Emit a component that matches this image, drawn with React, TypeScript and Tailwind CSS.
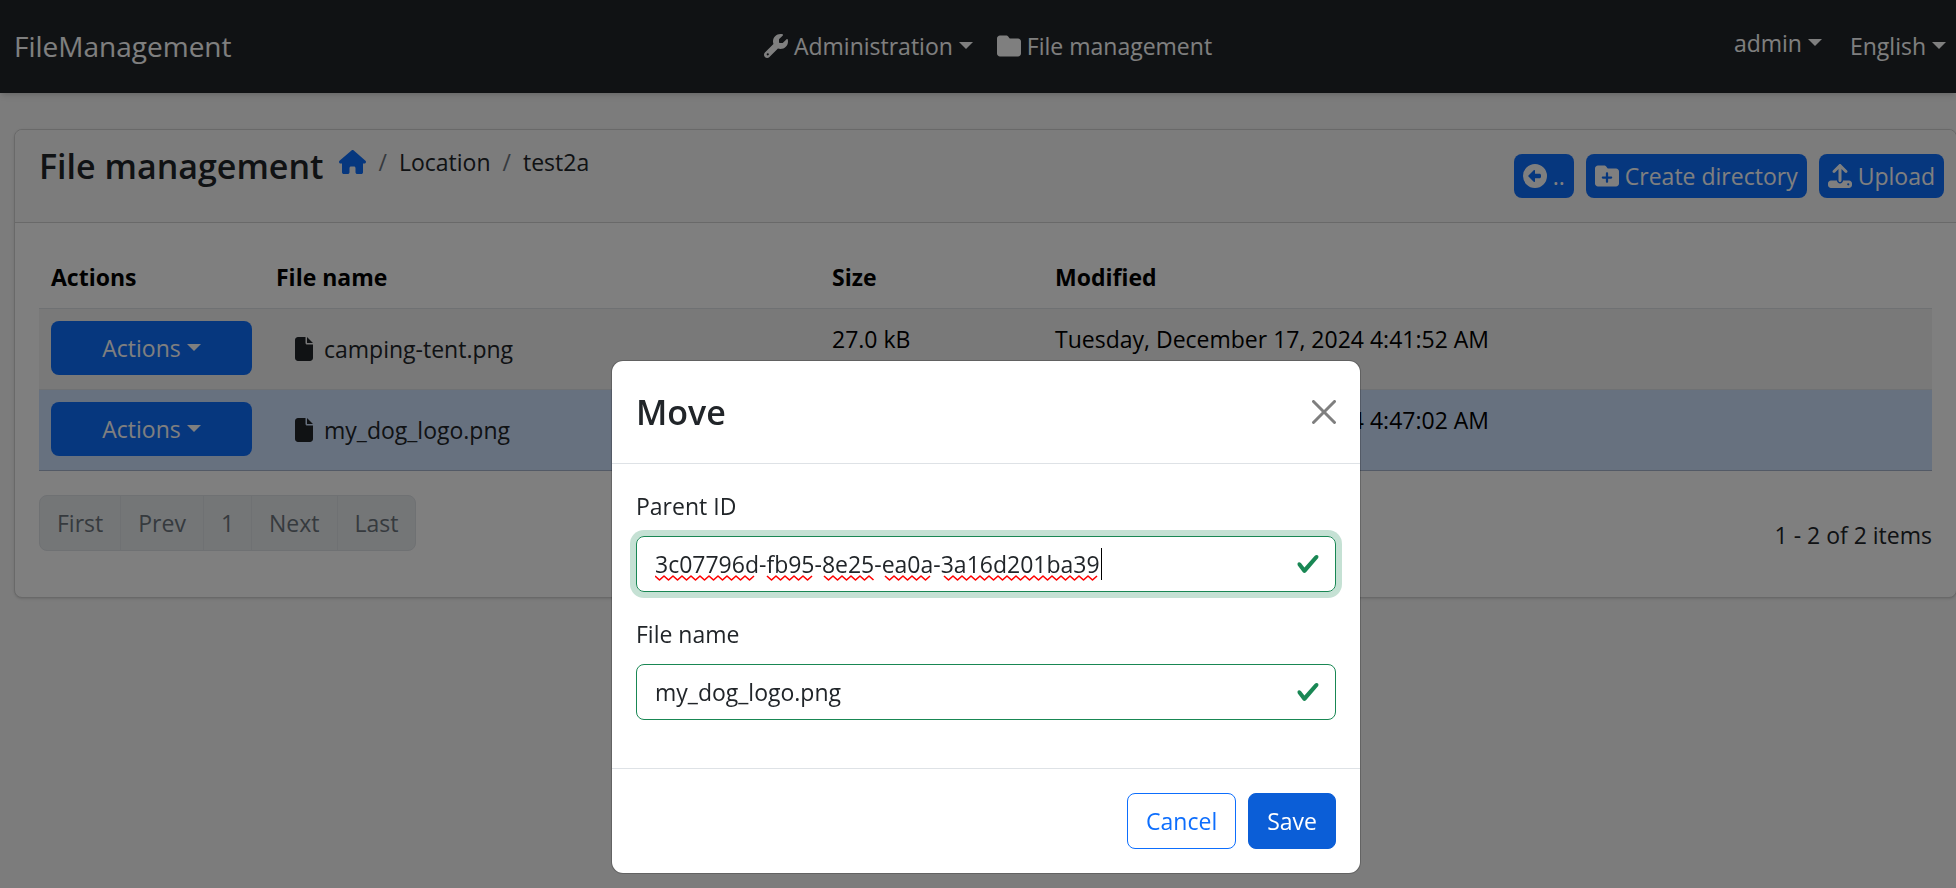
import React from "react";
import {
  FaWrench,
  FaFolder,
  FaHouse,
  FaCircleLeft,
  FaFolderPlus,
  FaUpload,
  FaFile,
} from "react-icons/fa6";

type FileRow = { name: string; size: string; modified: string; selected: boolean };

const files: FileRow[] = [
  {
    name: "camping-tent.png",
    size: "27.0 kB",
    modified: "Tuesday, December 17, 2024 4:41:52 AM",
    selected: false,
  },
  {
    name: "my_dog_logo.png",
    size: "27.0 kB",
    modified: "Tuesday, December 17, 2024 4:47:02 AM",
    selected: true,
  },
];

const pages = ["First", "Prev", "1", "Next", "Last"];

// Horizontal extents of the misspelled parts of the parent id.
const misspelled: [number, number][] = [
  [0, 103],
  [112, 159],
  [169, 220],
  [230, 279],
  [289, 445],
];

function wave([from, to]: [number, number]): string {
  let d = `M${from} 30`;
  let down = true;
  for (let x = from + 4.5; x <= to; x += 4.5) {
    d += ` L${x} ${down ? 34 : 30}`;
    down = !down;
  }
  return d;
}

function Caret() {
  return (
    <svg viewBox="0 0 14 7" className="ml-1.5 h-[7px] w-3.5 shrink-0 fill-current" aria-hidden="true">
      <path d="M0 0h14L7 7z" />
    </svg>
  );
}

function Check() {
  return (
    <svg viewBox="0 0 8 8" className="pointer-events-none absolute right-4 size-6 fill-[#198754]" aria-hidden="true">
      <path d="M2.3 6.73.6 4.53c-.4-1.04.46-1.4 1.1-.8l1.1 1.4 3.4-3.8c.6-.63 1.6-.27 1.2.7l-4 4.6c-.43.5-.8.4-1.1.1z" />
    </svg>
  );
}

function Navbar() {
  return (
    <header className="relative flex h-[93px] items-center justify-between bg-[#212529] pr-2.5 pb-0.5 pl-3.5 text-white shadow-md">
      <a href="#" className="flex-1 text-[28px]">
        FileManagement
      </a>
      <nav className="flex items-center gap-6 pl-4">
        <button type="button" className="flex items-center">
          <FaWrench className="mr-1.5 size-6" />
          Administration
          <Caret />
        </button>
        <a href="#" className="flex items-center">
          <FaFolder className="mr-1.5 size-6" />
          File management
        </a>
      </nav>
      <div className="flex flex-1 items-center justify-end gap-7">
        <button type="button" className="flex items-center pb-1.5">
          admin
          <Caret />
        </button>
        <button type="button" className="flex items-center">
          English
          <Caret />
        </button>
      </div>
    </header>
  );
}

function ToolButton({ icon, children }: { icon: React.ReactNode; children: React.ReactNode }) {
  return (
    <button type="button" className="flex h-11 items-center gap-1.5 rounded-lg bg-[#0d6efd] px-[9px] text-white">
      {icon}
      <span>{children}</span>
    </button>
  );
}

function FileTable() {
  return (
    <table className="w-full table-fixed text-left text-black">
      <thead>
        <tr className="h-[61px] border-b border-[#dee2e6]">
          <th className="w-[225px] px-3 font-bold">Actions</th>
          <th className="w-[556px] px-3 font-bold">File name</th>
          <th className="w-[223px] px-3 font-bold">Size</th>
          <th className="px-3 font-bold">Modified</th>
        </tr>
      </thead>
      <tbody>
        {files.map((f) => (
          <tr
            key={f.name}
            className={
              f.selected
                ? "h-[81px] border-b border-[#a6b5cc] bg-[#cfe2ff] align-top"
                : "h-[81px] border-b border-[#dee2e6] bg-[#f2f2f2] align-top"
            }
          >
            <td className="px-3 pt-3">
              <button
                type="button"
                className="flex h-[54px] w-full items-center justify-center rounded-lg bg-[#0d6efd] text-white"
              >
                Actions
                <Caret />
              </button>
            </td>
            <td className="px-3 pt-3">
              <a href="#" className="flex h-14 items-center px-4 text-[#212529]">
                <FaFile className="mr-2 size-6" />
                {f.name}
              </a>
            </td>
            <td className="px-3 pt-3">{f.size}</td>
            <td className="px-3 pt-3">{f.modified}</td>
          </tr>
        ))}
      </tbody>
    </table>
  );
}

function MoveDialog() {
  return (
    <div className="fixed inset-0 z-10 flex items-end justify-center bg-black/50 pb-3.5 pl-4">
      <div
        role="dialog"
        aria-modal="true"
        aria-labelledby="move-title"
        className="w-full max-w-[750px] rounded-xl border border-black/20 bg-white bg-clip-padding"
      >
        <div className="flex h-[103px] items-center justify-between border-b border-[#dee2e6] px-6">
          <h2 id="move-title" className="text-[34px] font-semibold">
            Move
          </h2>
          <button type="button" aria-label="Close">
            <svg viewBox="0 0 16 16" className="size-6 fill-[#7f7f7f]">
              <path d="M.293.293a1 1 0 0 1 1.414 0L8 6.586 14.293.293a1 1 0 1 1 1.414 1.414L9.414 8l6.293 6.293a1 1 0 0 1-1.414 1.414L8 9.414l-6.293 6.293a1 1 0 0 1-1.414-1.414L6.586 8 .293 1.707a1 1 0 0 1 0-1.414z" />
            </svg>
          </button>
        </div>
        <form className="flex flex-col gap-6 px-6 pt-6 pb-12">
          <div className="flex flex-col gap-3">
            <label htmlFor="parent-id">Parent ID</label>
            <div className="relative flex items-center">
              <input
                id="parent-id"
                type="text"
                defaultValue="3c07796d-fb95-8e25-ea0a-3a16d201ba39"
                spellCheck={false}
                className="h-14 w-full rounded-lg border border-[#198754] pr-14 pl-[18px] ring-6 ring-[#198754]/25 outline-none"
              />
              <svg viewBox="0 0 450 36" className="pointer-events-none absolute left-[19px] h-9 w-[450px]" aria-hidden="true">
                {misspelled.map((part) => (
                  <path key={part[0]} d={wave(part)} fill="none" stroke="#f00" strokeWidth="1.6" strokeLinejoin="round" />
                ))}
                <path d="M446.5 2v32" stroke="#000" />
              </svg>
              <Check />
            </div>
          </div>
          <div className="flex flex-col gap-3">
            <label htmlFor="file-name">File name</label>
            <div className="relative flex items-center">
              <input
                id="file-name"
                type="text"
                defaultValue="my_dog_logo.png"
                spellCheck={false}
                className="h-14 w-full rounded-lg border border-[#198754] pr-14 pl-[18px] outline-none"
              />
              <Check />
            </div>
          </div>
        </form>
        <div className="flex h-[105px] items-center justify-end gap-3 border-t border-[#dee2e6] px-6">
          <button type="button" className="h-14 rounded-lg border border-[#0d6efd] px-[18px] text-[#0d6efd]">
            Cancel
          </button>
          <button type="button" className="h-14 rounded-lg border border-[#0b5ed7] bg-[#0b5ed7] px-[18px] font-medium text-white">
            Save
          </button>
        </div>
      </div>
    </div>
  );
}

export default function App() {
  return (
    <div className="min-h-screen overflow-x-clip bg-[#f8f8f8] font-['Open_Sans','Noto_Sans',sans-serif] text-[23px] leading-9 text-[#212529]">
      <Navbar />
      <main className="pt-9 pl-3.5">
        <section className="-mr-px rounded-lg border border-[#d2d2d2] bg-white shadow-sm">
          <div className="flex h-[93px] items-start justify-between rounded-t-lg border-b border-[#d2d2d2] bg-[#f8f8f8] pr-3 pl-6">
            <div className="flex">
              <h1 className="pt-[18px] text-[34px] font-semibold">File management</h1>
              <nav aria-label="Breadcrumb" className="ml-4 flex items-center gap-3 self-start pt-3.5">
                <a href="#" aria-label="Home">
                  <FaHouse className="h-6 w-[27px] text-[#0d6efd]" />
                </a>
                <span className="text-[#6c757d]">/</span>
                <span>Location</span>
                <span className="text-[#6c757d]">/</span>
                <span>test2a</span>
              </nav>
            </div>
            <div className="flex gap-3 pt-6">
              <ToolButton icon={<FaCircleLeft className="size-6" />}>..</ToolButton>
              <ToolButton icon={<FaFolderPlus className="size-6" />}>Create directory</ToolButton>
              <ToolButton icon={<FaUpload className="size-6" />}>Upload</ToolButton>
            </div>
          </div>
          <div className="px-6 pt-6 pb-11">
            <FileTable />
            <div className="mt-6 flex items-start justify-between">
              <nav
                aria-label="Pages"
                className="flex divide-x divide-[#dee2e6] overflow-hidden rounded-lg border border-[#dee2e6] bg-[#e9ecef]"
              >
                {pages.map((p) => (
                  <button key={p} type="button" className="h-[54px] px-[17px] text-[#6c757d]">
                    {p}
                  </button>
                ))}
              </nav>
              <p className="pt-[22px]">1 - 2 of 2 items</p>
            </div>
          </div>
        </section>
      </main>
      <MoveDialog />
    </div>
  );
}
